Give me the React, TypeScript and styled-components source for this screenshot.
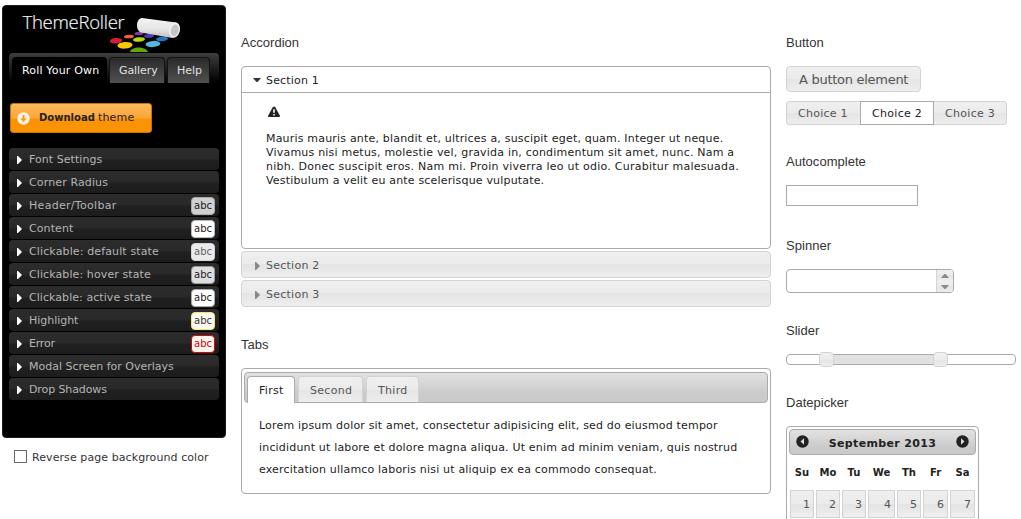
import React from "react";
import styled, { createGlobalStyle, css } from "styled-components";

const GlobalStyle = createGlobalStyle`
  * { box-sizing: border-box; }
  html, body { margin: 0; padding: 0; background: #fff; overflow: hidden; }
  body { font: 11px/14px "DejaVu Sans", Verdana, sans-serif; color: #222; }
  button, input { font: inherit; color: inherit; margin: 0; }
  h2, h3, p, ul { margin: 0; padding: 0; font-size: inherit; font-weight: normal; list-style: none; }
`;

const glass = css`background: linear-gradient(#efefef 0, #ebebeb 50%, #e4e4e4 50%, #eeeeee 100%);`;
const toolbar = css`background: linear-gradient(#e2e2e2, #cbcbcb 70%, #cacaca);`;

const Tracked = styled.span<{ $ls?: number }>`
  letter-spacing: ${p => p.$ls ?? 0.18}px;
  white-space: pre;
`;

const Page = styled.div`
  display: grid;
  grid-template-columns: 224px 530px 230px;
  column-gap: 15px;
  width: 1021px;
  height: 519px;
  padding-left: 2px;
  overflow: hidden;
`;

/* Sidebar */
const Sidebar = styled.aside`padding-top: 5px;`;
const Roller = styled.div`
  height: 433px;
  padding: 1px 6px 0;
  border: 1px solid #1c1c1c;
  border-radius: 4px;
  background: #000;
`;
const Logo = styled.svg`display: block; width: 210px; height: 46px;`;
const RollerTabs = styled.nav`
  display: flex;
  align-items: flex-end;
  gap: 2px;
  height: 30px;
  padding-left: 3px;
  border-radius: 4px 4px 5px 5px;
  background: linear-gradient(#3e3e3e, #181818 60%, #000);
`;
const RollerTab = styled.a<{ $w: number; $on?: boolean }>`
  width: ${p => p.$w}px;
  height: 26px;
  padding: 7px 0 0 9px;
  border: 1px solid ${p => (p.$on ? "#000" : "#111")};
  border-bottom: 0;
  border-radius: 4px 4px 0 0;
  color: ${p => (p.$on ? "#fff" : "#e0e0e0")};
  background: ${p => (p.$on ? "#000" : "linear-gradient(#2b2b2b, #505050)")};
  line-height: 12px;
`;
const Download = styled.button`
  display: flex;
  align-items: center;
  width: 142px;
  height: 30px;
  margin: 20px 0 15px 1px;
  padding: 0 0 0 6px;
  border: 1px solid #c77405;
  border-radius: 3px;
  background: linear-gradient(#fdb95b, #fba63a 49%, #fa9405 55%, #fb9200);
  color: #222;
  svg { margin-right: 9px; }
  b { font-size: 10px; letter-spacing: 0.02px; margin-right: 3px; }
`;
const Settings = styled.ul`display: flex; flex-direction: column; gap: 1px;`;
const Setting = styled.li`
  display: flex;
  align-items: center;
  height: 22px;
  padding: 2px 4px 0 8px;
  border-radius: 4px;
  background: linear-gradient(#2c2c2c, #292929 50%, #202020 54%, #1d1d1d);
  color: #b4b4b4;
  svg { margin: -1px 7px 0 0; }
`;
const Swatch = styled.span<{ $bg: string; $bd: string; $c: string }>`
  width: 24px;
  height: 18px;
  margin-left: auto;
  border: 1px solid ${p => p.$bd};
  border-radius: 4px;
  background: ${p => p.$bg};
  color: ${p => p.$c};
  font-size: 10px;
  line-height: 15px;
  text-align: center;
`;
const Reverse = styled.label`
  display: flex;
  align-items: flex-start;
  gap: 5px;
  padding: 12px 0 0 12px;
  color: #333;
  span:last-child { padding-top: 1px; }
`;
const Box = styled.span`width: 13px; height: 13px; border: 1px solid #666; background: #fff;`;

/* Demo columns */
const Column = styled.main`padding-top: 35px;`;
const Heading = styled.h2<{ $top?: number }>`
  margin: ${p => p.$top ?? 0}px 0 16px;
  font: 13px/15px "Liberation Sans", Arial, sans-serif;
  letter-spacing: 0.03px;
  color: #333;
`;

const Panel = styled.section`
  height: 183px;
  border: 1px solid #aaa;
  border-radius: 4px;
`;
const PanelHead = styled.h3`
  && { padding: 2px 0 0 11px; }
  display: flex;
  align-items: center;
  height: 26px;
  border-bottom: 1px solid #aaa;
  svg { margin: -1px 5px 0 0; }
`;
const PanelBody = styled.div`
  padding: 13px 0 0 24px;
  svg { display: block; margin: 0 0 14px 2px; }
`;
const Line = styled.span<{ $ls: number }>`display: block; white-space: nowrap; letter-spacing: ${p => p.$ls}px;`;
const Collapsed = styled.h3`
  && { margin-top: 2px; padding: 2px 0 0 13px; }
  display: flex;
  align-items: center;
  height: 27px;
  border: 1px solid #d3d3d3;
  border-radius: 4px;
  ${glass}
  color: #555;
  svg { margin-right: 6px; }
`;

const Tabs = styled.section`
  height: 126px;
  padding: 3px 2px;
  border: 1px solid #aaa;
  border-radius: 4px;
`;
const TabBar = styled.div`
  display: flex;
  align-items: flex-end;
  height: 31px;
  padding-left: 2px;
  border: 1px solid #aaa;
  border-radius: 4px;
  ${toolbar}
`;
const Tab = styled.a<{ $w: number; $on?: boolean }>`
  width: ${p => p.$w}px;
  height: ${p => (p.$on ? 27 : 26)}px;
  margin: 0 3px ${p => (p.$on ? -1 : 0)}px 0;
  padding: 7px 0 0 11px;
  border: 1px solid ${p => (p.$on ? "#aaa" : "#d3d3d3")};
  border-bottom: 0;
  border-radius: 4px 4px 0 0;
  color: ${p => (p.$on ? "#212121" : "#555")};
  ${p => (p.$on ? css`background: #fff;` : glass)}
`;
const TabBody = styled.p`&& { padding: 12px 0 0 15px; line-height: 22px; }`;

const Button = styled.button`
  display: block;
  width: 135px;
  height: 26px;
  margin-bottom: 9px;
  padding: 1px 0 0 12px;
  border: 1px solid #d3d3d3;
  border-radius: 4px;
  ${glass}
  color: #555;
  font-size: 13px;
  text-align: left;
`;
const Choices = styled.div`display: flex; margin-bottom: 29px;`;
const Choice = styled.button<{ $w: number; $on?: boolean }>`
  width: ${p => p.$w}px;
  height: 24px;
  padding: 1px 0 0 11px;
  border: 1px solid ${p => (p.$on ? "#aaa" : "#d3d3d3")};
  text-align: left;
  color: ${p => (p.$on ? "#212121" : "#555")};
  ${p => (p.$on ? css`background: #fff;` : glass)}
  &:first-child { border-right: 0; border-radius: 4px 0 0 4px; }
  &:last-child { border-left: 0; border-radius: 0 4px 4px 0; }
`;
const Field = styled.input`
  display: block;
  width: 132px;
  height: 21px;
  margin-bottom: 32px;
  border: 1px solid #a9a9b0;
  background: #fff;
`;
const Spinner = styled.div`
  display: flex;
  justify-content: flex-end;
  width: 168px;
  height: 24px;
  margin-bottom: 30px;
  border: 1px solid #aaa;
  border-radius: 4px;
  overflow: hidden;
`;
const Steps = styled.div`width: 17px; border-left: 1px solid #d3d3d3;`;
const Step = styled.div`
  display: flex;
  align-items: center;
  justify-content: center;
  height: 11px;
  ${glass}
`;
const Track = styled.div`
  position: relative;
  height: 11px;
  margin-bottom: 30px;
  border: 1px solid #aaa;
  border-radius: 4px;
`;
const Range = styled.div`height: 9px; margin: 0 75px 0 39px; background: #e1e1e1;`;
const Handle = styled.span<{ $x: number }>`
  position: absolute;
  top: -3px;
  left: ${p => p.$x}px;
  width: 15px;
  height: 15px;
  border: 1px solid #d3d3d3;
  border-radius: 4px;
  ${glass}
`;
const Picker = styled.div`
  width: 193px;
  height: 180px;
  padding: 2px;
  border: 1px solid #aaa;
  border-radius: 4px;
`;
const PickerHead = styled.div`
  display: flex;
  align-items: center;
  justify-content: space-between;
  height: 26px;
  padding: 0 6px 0 6px;
  border: 1px solid #aaa;
  border-radius: 4px;
  ${toolbar}
  font-weight: bold;
  svg { margin-bottom: 1px; }
  span { padding-top: 3px; }
`;
const Week = styled.div`
  display: grid;
  grid-template-columns: 24px 24px 24px 27px 24px 25px 25px;
  column-gap: 2px;
  padding-left: 1px;
`;
const DayName = styled.b`
  height: 35px;
  padding-top: 11px;
  font-size: 10px;
  text-align: center;
  white-space: nowrap;
`;
const Day = styled.a`
  height: 28px;
  padding: 7px 3px 0 0;
  border: 1px solid #d3d3d3;
  ${glass}
  color: #555;
  text-align: right;
`;

const Caret = ({ dir, color }: { dir: "right" | "down" | "up"; color: string }) =>
  dir === "right" ? (
    <svg width="5" height="8" viewBox="0 0 5 8"><path d="M0 0h1l4 4-4 4H0z" fill={color} /></svg>
  ) : (
    <svg width="8" height="4" viewBox="0 0 8 4">
      <path d={dir === "down" ? "M0 0h8L4.500 4h-1z" : "M0 4h8L4.500 0h-1z"} fill={color} />
    </svg>
  );

const Nav = ({ flip }: { flip?: boolean }) => (
  <svg width="13" height="13" viewBox="0 0 13 13">
    <circle cx="6.5" cy="6.5" r="6.2" fill="#222" />
    <path d={flip ? "M5 3.2v6.6l3.5-3.3z" : "M8 3.2v6.6L4.5 6.5z"} fill="#ddd" />
  </svg>
);

const dots: [number, number, string, number, number][] = [
  [139, 33.5, "#7c3fa4", 4.5, 1.7],
  [129, 36.5, "#f2622c", 5, 1.8],
  [149, 36, "#4a3bb5", 5, 2],
  [139, 39.5, "#b5dc13", 6, 2.3],
  [162, 39, "#1f78c4", 6, 2.3],
  [116, 40.8, "#d61e33", 6.2, 2.7],
  [153, 44, "#55b4e0", 7.4, 3.1],
  [125, 45.3, "#f8c800", 7.6, 3.3],
];

const settings: { name: string; ls: number; bg?: string; bd?: string; c?: string }[] = [
  { name: "Font Settings", ls: 0.06 },
  { name: "Corner Radius", ls: 0.13 },
  { name: "Header/Toolbar", ls: 0.3, bg: "#d0d0d0", bd: "#aaa", c: "#222" },
  { name: "Content", ls: 0.1, bg: "#fff", bd: "#bbb", c: "#222" },
  { name: "Clickable: default state", ls: 0.13, bg: "#ebebeb", bd: "#d3d3d3", c: "#666" },
  { name: "Clickable: hover state", ls: 0.1, bg: "#dedede", bd: "#999", c: "#222" },
  { name: "Clickable: active state", ls: 0.06, bg: "#fff", bd: "#aaa", c: "#222" },
  { name: "Highlight", ls: -0.03, bg: "#fcfaf0", bd: "#f5e27c", c: "#363636" },
  { name: "Error", ls: -0.22, bg: "#fef2ee", bd: "#cd0a0a", c: "#cd0a0a" },
  { name: "Modal Screen for Overlays", ls: -0.01 },
  { name: "Drop Shadows", ls: -0.1 },
];

export default function App() {
  return (
    <>
      <GlobalStyle />
      <Page>
        <Sidebar>
          <Roller>
            <Logo viewBox="9 7 210 46">
              <defs>
                <linearGradient id="tube" x1="0" y1="0" x2="0" y2="1">
                  <stop offset="0" stopColor="#f4f4f4" />
                  <stop offset="0.6" stopColor="#e3e3e3" />
                  <stop offset="1" stopColor="#bdbdbd" />
                </linearGradient>
              </defs>
              <text x="22.500" y="29.300" fill="#f4f4f4" stroke="#f4f4f4" strokeWidth="0.200" fontFamily="Open Sans, sans-serif" fontSize="18.500" fontWeight="300" letterSpacing="-0.260">ThemeRoller</text>
              {dots.map(([x, y, c, rx, ry]) => (
                <ellipse key={c} cx={x} cy={y} rx={rx} ry={ry} fill={c} transform={`rotate(-4 ${x} ${y})`} />
              ))}
              <path d="M130 52c1-6 16-6 18 0z" fill="#63a70a" />
              <path d="M142 18L176 22.500C182 24 181 38 172 38L141 32.500C135 30 136 18.500 142 18z" fill="url(#tube)" />
              <ellipse cx="174.500" cy="30" rx="5.300" ry="7.600" fill="#f2f2f2" transform="rotate(12 174.500 30)" />
              <ellipse cx="174.800" cy="30.300" rx="3.900" ry="6" fill="#c6c6c6" transform="rotate(12 174.500 30)" />
            </Logo>
            <RollerTabs>
              <RollerTab $w={95} $on><Tracked $ls={0.17}>Roll Your Own</Tracked></RollerTab>
              <RollerTab $w={56}><Tracked $ls={-0.07}>Gallery</Tracked></RollerTab>
              <RollerTab $w={43}><Tracked $ls={-0.02}>Help</Tracked></RollerTab>
            </RollerTabs>
            <Download>
              <svg width="13" height="13" viewBox="0 0 13 13">
                <circle cx="6.5" cy="6.5" r="6.2" fill="#fff3e2" />
                <path d="M5.500 3h2v3.500h2.300L6.500 10 3.200 6.500h2.300z" fill="#f59a1b" />
              </svg>
              <b>Download</b>
              <Tracked $ls={0.2}>theme</Tracked>
            </Download>
            <Settings>
              {settings.map(s => (
                <Setting key={s.name}>
                  <Caret dir="right" color="#fff" />
                  <Tracked $ls={s.ls}>{s.name}</Tracked>
                  {s.bg && <Swatch $bg={s.bg} $bd={s.bd!} $c={s.c!}>abc</Swatch>}
                </Setting>
              ))}
            </Settings>
          </Roller>
          <Reverse>
            <Box />
            <Tracked $ls={0.08}>Reverse page background color</Tracked>
          </Reverse>
        </Sidebar>

        <Column>
          <Heading>Accordion</Heading>
          <Panel>
            <PanelHead><Caret dir="down" color="#333" /><Tracked>Section 1</Tracked></PanelHead>
            <PanelBody>
              <svg width="12" height="12" viewBox="0 0 12 12">
                <path d="M4.600 1.500Q6 -.3 7.400 1.500L11.800 9.500Q12.200 11 11 11H1Q-.2 11 .2 9.500z" fill="#222" />
                <path d="M5.200 3.200h1.600v3.600H5.200zM5.200 8h1.600v1.600H5.200z" fill="#fff" />
              </svg>
              <p>
                <Line $ls={0.189}>Mauris mauris ante, blandit et, ultrices a, suscipit eget, quam. Integer ut neque.</Line>
                <Line $ls={0.205}>Vivamus nisi metus, molestie vel, gravida in, condimentum sit amet, nunc. Nam a</Line>
                <Line $ls={0.25}>nibh. Donec suscipit eros. Nam mi. Proin viverra leo ut odio. Curabitur malesuada.</Line>
                <Line $ls={0.175}>Vestibulum a velit eu ante scelerisque vulputate.</Line>
              </p>
            </PanelBody>
          </Panel>
          <Collapsed><Caret dir="right" color="#888" /><Tracked $ls={0.25}>Section 2</Tracked></Collapsed>
          <Collapsed><Caret dir="right" color="#888" /><Tracked $ls={0.25}>Section 3</Tracked></Collapsed>

          <Heading $top={30}>Tabs</Heading>
          <Tabs>
            <TabBar>
              <Tab $w={48} $on><Tracked $ls={0.3}>First</Tracked></Tab>
              <Tab $w={65}><Tracked $ls={0.3}>Second</Tracked></Tab>
              <Tab $w={53}><Tracked $ls={0.32}>Third</Tracked></Tab>
            </TabBar>
            <TabBody>
              <Line $ls={0.183}>Lorem ipsum dolor sit amet, consectetur adipisicing elit, sed do eiusmod tempor</Line>
              <Line $ls={0.176}>incididunt ut labore et dolore magna aliqua. Ut enim ad minim veniam, quis nostrud</Line>
              <Line $ls={0.18}>exercitation ullamco laboris nisi ut aliquip ex ea commodo consequat.</Line>
            </TabBody>
          </Tabs>
        </Column>

        <Column>
          <Heading>Button</Heading>
          <Button><Tracked $ls={-0.28}>A button element</Tracked></Button>
          <Choices>
            <Choice $w={74}><Tracked $ls={0.25}>Choice 1</Tracked></Choice>
            <Choice $w={74} $on><Tracked $ls={0.3}>Choice 2</Tracked></Choice>
            <Choice $w={73}><Tracked $ls={0.3}>Choice 3</Tracked></Choice>
          </Choices>
          <Heading>Autocomplete</Heading>
          <Field />
          <Heading>Spinner</Heading>
          <Spinner>
            <Steps>
              <Step><Caret dir="up" color="#888" /></Step>
              <Step><Caret dir="down" color="#888" /></Step>
            </Steps>
          </Spinner>
          <Heading>Slider</Heading>
          <Track>
            <Range />
            <Handle $x={32} />
            <Handle $x={146} />
          </Track>
          <Heading>Datepicker</Heading>
          <Picker>
            <PickerHead>
              <Nav />
              <Tracked $ls={0.34}>September 2013</Tracked>
              <Nav flip />
            </PickerHead>
            <Week>
              {["Su", "Mo", "Tu", "We", "Th", "Fr", "Sa"].map(d => <DayName key={d}>{d}</DayName>)}
              {[1, 2, 3, 4, 5, 6, 7].map(n => <Day key={n}>{n}</Day>)}
            </Week>
          </Picker>
        </Column>
      </Page>
    </>
  );
}
